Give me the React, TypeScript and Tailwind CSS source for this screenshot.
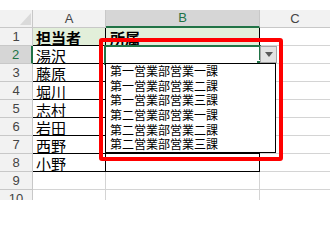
const JP = "font-['Noto_Sans_CJK_JP','Noto_Sans',sans-serif]"
const LATIN = "font-['Liberation_Sans',Arial,sans-serif]"

const ROWS: { a: string; b: string }[] = [
  { a: '担当者', b: '所属' },
  { a: '湯沢', b: '' },
  { a: '藤原', b: '' },
  { a: '堀川', b: '' },
  { a: '志村', b: '' },
  { a: '岩田', b: '' },
  { a: '西野', b: '' },
  { a: '小野', b: '' },
  { a: '', b: '' },
  { a: '', b: '' },
]

const OPTIONS = [
  '第一営業部営業一課',
  '第一営業部営業二課',
  '第一営業部営業三課',
  '第二営業部営業一課',
  '第二営業部営業二課',
  '第二営業部営業三課',
]

function CornerCell() {
  return (
    <div className="h-[18px] flex items-end justify-end pr-[1px] pb-[2px] border-r border-b border-[#c8c8c8] bg-[#f2f2f2]">
      <svg width="11" height="12" viewBox="0 0 11 12">
        <polygon points="11,0 11,12 0,12" fill="#dadada" />
      </svg>
    </div>
  )
}

export default function App() {
  return (
    <div className="relative w-[330px] h-[200px] overflow-hidden bg-white">
      <div className="h-[10px] bg-white" />

      <div className="grid grid-cols-[33px_73px_154px_1fr]">
        {/* column headers */}
        <CornerCell />
        <div className={`h-[18px] flex items-center justify-center border-r border-b border-[#c8c8c8] bg-[#f2f2f2] text-[13px] text-[#444] ${LATIN}`}>A</div>
        <div className={`h-[18px] flex items-center justify-center border-r border-[#c8c8c8] border-b-2 border-b-[#217346] bg-[#d6d6d6] text-[13px] text-[#217346] ${LATIN}`}>B</div>
        <div className={`h-[18px] flex items-center justify-center border-b border-[#c8c8c8] bg-[#f2f2f2] text-[13px] text-[#444] ${LATIN}`}>C</div>

        {ROWS.map((row, i) => {
          const n = i + 1
          const inTable = n <= 8
          const header = n === 1
          const line = inTable ? 'border-black' : 'border-[#d4d4d4]'
          return (
            <div key={n} className="contents">
              <div
                className={`h-[18px] flex items-center justify-center border-b border-[#c8c8c8] text-[13px] ${LATIN} ${
                  n === 2
                    ? 'bg-[#d6d6d6] text-[#217346] border-r-2 border-r-[#217346]'
                    : 'bg-[#f2f2f2] text-[#444] border-r border-r-[#c8c8c8]'
                }`}
              >
                {n}
              </div>
              <div
                className={`h-[18px] flex items-center pl-[3px] pt-[1px] border-r border-b ${line} ${header ? 'bg-[#e2efda] font-bold' : ''} text-[15px] leading-none text-black ${JP}`}
              >
                {row.a}
              </div>
              <div
                className={`h-[18px] flex items-center pl-[4px] pt-[1px] border-r border-b ${line} ${header ? 'bg-[#e2efda] font-bold' : ''} text-[15px] leading-none text-black ${JP}`}
              >
                {row.b}
              </div>
              <div className="h-[18px] border-b border-[#d4d4d4]" />
            </div>
          )
        })}
      </div>

      {/* selected cell B2 */}
      <div className="absolute left-[104px] top-[45px] w-[157px] h-[20px] border-2 border-[#217346]" />
      <div className="absolute left-[256px] top-[60px] w-[6px] h-[6px] bg-[#217346] border border-white" />

      {/* dropdown button */}
      <div className="absolute left-[260px] top-[46px] w-[17px] h-[17px] flex items-center justify-center bg-[#e3e3e3] border border-[#a6a6a6]">
        <svg width="8" height="5" viewBox="0 0 8 5">
          <polygon points="0,0 8,0 4,5" fill="#595959" />
        </svg>
      </div>

      {/* dropdown list */}
      <div className={`absolute left-[105px] top-[63px] w-[171px] h-[90px] bg-white border border-black pl-[4px] text-[12px] leading-[14.67px] text-black ${JP}`}>
        {OPTIONS.map((o) => (
          <div key={o}>{o}</div>
        ))}
      </div>

      {/* red highlight */}
      <div className="absolute left-[99px] top-[38px] w-[184px] h-[123px] border-4 border-[#ff0000] rounded-[3px]" />
    </div>
  )
}
